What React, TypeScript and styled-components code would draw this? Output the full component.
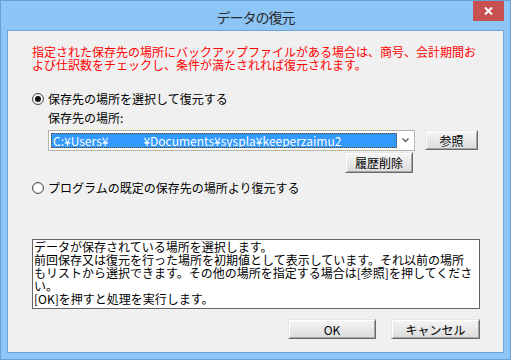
import React from "react";
import styled, { createGlobalStyle } from "styled-components";

const GlobalStyle = createGlobalStyle`
  html, body { margin: 0; padding: 0; background: #ffffff; }
  body { font-family: "Noto Sans CJK JP", "Noto Sans", sans-serif; }
  * { box-sizing: border-box; }
`;

const FONT = `"Noto Sans CJK JP", "Noto Sans", sans-serif`;

const Window = styled.div`
  width: 511px;
  height: 360px;
  border: 1px solid #6a9fd3;
  background: #8cc5f6;
  display: flex;
  flex-direction: column;
  padding: 0 6px 6px 6px;
  font-family: ${FONT};
`;

const TitleBar = styled.div`
  height: 29px;
  display: grid;
  grid-template-columns: 1fr auto 1fr;
  align-items: center;
`;

const Title = styled.div`
  grid-column: 2;
  font-size: 14px;
  letter-spacing: -1px;
  color: #2a2a2a;
  line-height: 16px;
  padding-top: 2px;
`;

const CloseButton = styled.div`
  grid-column: 3;
  justify-self: end;
  align-self: start;
  width: 31px;
  height: 20px;
  background: #c75050;
  display: flex;
  align-items: center;
  justify-content: center;
`;

const Client = styled.div`
  flex: 1;
  border: 1px solid #6fa4d6;
  background: #f0f0f0;
  padding: 14px 23px 0 24px;
  display: flex;
  flex-direction: column;
  font-size: 12px;
  line-height: 13px;
  color: #000;
`;

const Notice = styled.div`
  color: #ff0000;
  white-space: nowrap;
`;

const RadioRow = styled.div<{ $mt: number }>`
  display: flex;
  align-items: center;
  gap: 4px;
  margin-top: ${(p) => p.$mt}px;
  height: 13px;
  white-space: nowrap;
`;

const RadioCircle = styled.span<{ $checked?: boolean }>`
  width: 12px;
  height: 12px;
  border-radius: 50%;
  border: 1px solid #4a4a4a;
  background: #ffffff;
  box-shadow: inset 0 0 0 1px #e2e2e2;
  display: flex;
  align-items: center;
  justify-content: center;
  flex: none;
  &::after {
    content: "";
    display: ${(p) => (p.$checked ? "block" : "none")};
    width: 6px;
    height: 6px;
    border-radius: 50%;
    background: #111;
  }
`;

const Indented = styled.div`
  padding-left: 16px;
  display: flex;
  flex-direction: column;
`;

const FieldLabel = styled.div`
  margin-top: 6px;
  height: 13px;
`;

const ComboGrid = styled.div`
  margin-top: 6px;
  display: grid;
  grid-template-columns: 367px 53px;
  column-gap: 10px;
  row-gap: 1px;
  align-items: start;
`;

const Combo = styled.div`
  height: 21px;
  border: 1px solid #b4b4b4;
  background: #ffffff;
  padding: 2px 0 2px 2px;
  display: flex;
  align-items: stretch;
`;

const Selected = styled.div`
  flex: 1;
  background: #3399ff;
  border: 1px dotted #6b3d12;
  color: #ffffff;
  font-size: 12px;
  line-height: 13px;
  padding-left: 1px;
  white-space: nowrap;
  overflow: hidden;
  display: flex;
  align-items: center;
`;

const Redacted = styled.span`
  display: inline-block;
  width: 35px;
`;

const DropArrow = styled.div`
  width: 17px;
  display: flex;
  align-items: center;
  justify-content: center;
`;

const Button = styled.div<{ $w: number; $h?: number }>`
  width: ${(p) => p.$w}px;
  height: ${(p) => p.$h ?? 20}px;
  border-style: solid;
  border-width: 1px;
  border-color: #e6e6e6 #6a6a6a #6a6a6a #e6e6e6;
  box-shadow: inset 1px 1px 0 #ffffff, inset -1px -1px 0 #a5a5a5;
  background: linear-gradient(#f6f6f6, #e8e8e8 50%, #dcdcdc);
  display: flex;
  align-items: center;
  justify-content: center;
  font-size: 12px;
  line-height: 13px;
  color: #000;
  white-space: nowrap;
`;

const HistoryButton = styled(Button)`
  grid-column: 1;
  justify-self: end;
  margin-right: 2px;
`;

const InfoBox = styled.div`
  margin-top: 45px;
  height: 70px;
  border: 1px solid #646464;
  background: #ffffff;
  padding: 0 0 0 1px;
  white-space: nowrap;
  overflow: hidden;
`;

const ButtonRow = styled.div`
  margin-top: 10px;
  display: flex;
  justify-content: flex-end;
  gap: 15px;
`;

export default function App() {
  return (
    <>
      <GlobalStyle />
      <Window>
        <TitleBar>
          <Title>データの復元</Title>
          <CloseButton>
            <svg width="9" height="8" viewBox="0 0 9 8">
              <path d="M1 0.5 L8 7.5 M8 0.5 L1 7.5" stroke="#ffffff" strokeWidth="2" fill="none" />
            </svg>
          </CloseButton>
        </TitleBar>
        <Client>
          <Notice>
            指定された保存先の場所にバックアップファイルがある場合は、商号、会計期間お
            <br />
            よび仕訳数をチェックし、条件が満たされれば復元されます。
          </Notice>
          <RadioRow $mt={21}>
            <RadioCircle $checked />
            <span>保存先の場所を選択して復元する</span>
          </RadioRow>
          <Indented>
            <FieldLabel>保存先の場所:</FieldLabel>
            <ComboGrid>
              <Combo>
                <Selected>
                  C:¥Users¥<Redacted />¥Documents¥syspla¥keeperzaimu2
                </Selected>
                <DropArrow>
                  <svg width="7" height="5" viewBox="0 0 7 5">
                    <path d="M0.5 0.5 L3.5 3.5 L6.5 0.5" stroke="#606060" strokeWidth="1.5" fill="none" />
                  </svg>
                </DropArrow>
              </Combo>
              <Button $w={53}>参照</Button>
              <HistoryButton $w={68} $h={21}>履歴削除</HistoryButton>
            </ComboGrid>
          </Indented>
          <RadioRow $mt={8}>
            <RadioCircle />
            <span>プログラムの既定の保存先の場所より復元する</span>
          </RadioRow>
          <InfoBox>
            データが保存されている場所を選択します。
            <br />
            前回保存又は復元を行った場所を初期値として表示しています。それ以前の場所
            <br />
            もリストから選択できます。その他の場所を指定する場合は[参照]を押してくださ
            <br />
            い。
            <br />
            [OK]を押すと処理を実行します。
          </InfoBox>
          <ButtonRow>
            <Button $w={88}>OK</Button>
            <Button $w={89}>キャンセル</Button>
          </ButtonRow>
        </Client>
      </Window>
    </>
  );
}
